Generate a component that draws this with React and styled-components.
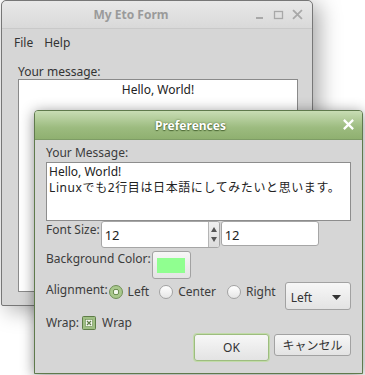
import React from "react";
import styled, { createGlobalStyle } from "styled-components";

const GlobalStyle = createGlobalStyle`
  html, body {
    margin: 0;
    padding: 0;
    background: #ffffff;
  }
  body {
    font-family: "Noto Sans", "Noto Sans CJK JP", sans-serif;
    font-size: 12px;
    color: #3c3c3c;
  }
`;

const Desktop = styled.div`
  position: relative;
  width: 365px;
  height: 375px;
  overflow: hidden;
`;

const MainWindow = styled.div`
  position: absolute;
  left: 1px;
  top: 0;
  width: 310px;
  height: 304px;
  border: 1px solid #777;
  border-radius: 5px 5px 2px 2px;
  background: #d6d6d6;
  box-shadow: 6px 4px 22px rgba(0, 0, 0, 0.35);
  display: flex;
  flex-direction: column;
`;

const MainTitle = styled.div`
  height: 27px;
  border-bottom: 1px solid #c9c9c9;
  border-radius: 5px 5px 0 0;
  background: linear-gradient(#e8e8e8, #d9d9d9);
  display: flex;
  align-items: center;
  justify-content: center;
  padding-right: 52px;
  position: relative;
  font-weight: bold;
  font-size: 12px;
  color: #9a9a9a;
`;

const TitleControls = styled.div`
  position: absolute;
  right: 9px;
  top: 8px;
  display: flex;
  gap: 8px;
  align-items: center;
`;

const MenuBar = styled.div`
  display: flex;
  gap: 11px;
  padding: 0 0 0 12px;
  height: 26px;
  font-size: 12px;
  color: #333;
  align-items: center;
`;

const MainContent = styled.div`
  padding: 9px 14px 12px 16px;
  display: flex;
  flex-direction: column;
  flex: 1;
`;

const MainLabel = styled.div`
  font-size: 12px;
  color: #333;
  line-height: 15px;
`;

const MainBox = styled.div`
  height: 210px;
  border: 1px solid #8a8a8a;
  background: #fff;
  text-align: center;
  font-size: 12px;
  color: #222;
  padding-top: 1px;
`;

const Dialog = styled.div`
  position: absolute;
  left: 34px;
  top: 110px;
  width: 327px;
  height: 262px;
  border: 1px solid #5f7a4c;
  border-radius: 4px 4px 0 0;
  background: #d6d6d6;
  box-shadow: 0 2px 14px rgba(0, 0, 0, 0.45);
  display: flex;
  flex-direction: column;
`;

const DialogTitle = styled.div`
  height: 28px;
  border-bottom: 1px solid #7e9c66;
  border-radius: 3px 3px 0 0;
  background: linear-gradient(#c8ddb4, #9cbb7f 60%, #8fb070);
  display: flex;
  align-items: center;
  justify-content: center;
  padding-right: 16px;
  position: relative;
  font-weight: bold;
  font-size: 12px;
  color: #fff;
  text-shadow: 0 0 2px #4d6a36, 0 1px 1px #4d6a36;
`;

const DialogClose = styled.div`
  position: absolute;
  right: 8px;
  top: 8px;
  display: flex;
`;

const DialogBody = styled.div`
  padding: 5px 11px 0 11px;
  display: flex;
  flex-direction: column;
`;

const Label = styled.div`
  font-size: 12px;
  color: #3c3c3c;
  line-height: 16px;
  white-space: nowrap;
  padding-top: ${(p) => p.$top || 0}px;
`;

const TextArea = styled.div`
  height: 55px;
  border: 1px solid #8d8d8d;
  background: #fff;
  padding: 1px 2px;
  font-size: 12px;
  line-height: 16px;
  color: #222;
  margin-top: 1px;
`;

const WideLine = styled.span`
  letter-spacing: 0.6px;
  white-space: nowrap;
`;

const Row = styled.div`
  display: flex;
  align-items: flex-start;
  gap: ${(p) => p.$gap || 1}px;
  margin-top: ${(p) => p.$mt || 0}px;
`;

const SpinBox = styled.div`
  display: flex;
  width: 117px;
  height: 25px;
  border: 1px solid #a6a6a6;
  border-radius: 3px;
  background: #fff;
  overflow: hidden;
`;

const SpinText = styled.div`
  flex: 1;
  padding: 4px 0 0 3px;
  font-size: 13px;
  color: #222;
`;

const SpinArrows = styled.div`
  width: 10px;
  border-left: 1px solid #b5b5b5;
  background: linear-gradient(#f0f0f0, #dcdcdc);
  display: flex;
  flex-direction: column;
  align-items: center;
  justify-content: space-around;
  padding: 2px 0;
`;

const TextBox = styled.div`
  box-sizing: border-box;
  width: 98px;
  height: 25px;
  border: 1px solid #a6a6a6;
  border-radius: 3px;
  background: #fff;
  padding: 4px 0 0 3px;
  font-size: 13px;
  color: #222;
`;

const Button = styled.div`
  box-sizing: border-box;
  width: ${(p) => p.$w}px;
  height: ${(p) => p.$h}px;
  border: 1px solid ${(p) => (p.$focus ? "#9dbd7f" : "#a2a2a2")};
  box-shadow: ${(p) => (p.$focus ? "0 0 0 1px #c2dba9" : "none")};
  border-radius: 3px;
  background: linear-gradient(#f7f7f7, #e3e3e3);
  display: flex;
  align-items: center;
  justify-content: center;
  font-size: 12px;
  color: #333;
`;

const Swatch = styled.div`
  width: 28px;
  height: 15px;
  background: ${(p) => p.$color};
`;

const RadioGroup = styled.div`
  display: flex;
  align-items: center;
  padding-top: 1px;
`;

const RadioItem = styled.div`
  display: flex;
  align-items: center;
  gap: 5px;
  margin-right: ${(p) => p.$mr}px;
  font-size: 12px;
`;

const RadioDot = styled.div`
  box-sizing: border-box;
  width: 14px;
  height: 14px;
  border-radius: 50%;
  border: 1px solid ${(p) => (p.$on ? "#6f8f55" : "#a3a3a3")};
  background: ${(p) =>
    p.$on
      ? "radial-gradient(circle, #f4f8ef 0 2px, #6f8f55 2.5px 3px, #a8c78c 3.5px)"
      : "linear-gradient(#ffffff, #e6e6e6)"};
`;

const Select = styled.div`
  box-sizing: border-box;
  width: 69px;
  height: 28px;
  border: 1px solid #a2a2a2;
  border-radius: 3px;
  background: linear-gradient(#f7f7f7, #e3e3e3);
  display: flex;
  align-items: center;
  justify-content: space-between;
  padding: 3px 9px 0 5px;
  font-size: 12px;
  color: #333;
`;

const CheckItem = styled.div`
  display: flex;
  align-items: center;
  gap: 6px;
  font-size: 12px;
  padding-top: 4px;
`;

const Footer = styled.div`
  display: flex;
  justify-content: flex-end;
  gap: 5px;
  margin-top: 3px;
  align-items: flex-start;
`;

const Minimize = () => (
  <svg width="10" height="10" viewBox="0 0 10 10">
    <rect x="1" y="7" width="7" height="2" fill="#a8a8a8" />
  </svg>
);

const Maximize = () => (
  <svg width="11" height="10" viewBox="0 0 11 10">
    <rect x="1.5" y="1.5" width="8" height="7" fill="none" stroke="#a8a8a8" strokeWidth="1.3" />
  </svg>
);

const CloseX = ({ color, size = 10, width = 1.8 }) => (
  <svg width={size} height={size} viewBox="0 0 10 10">
    <path d="M1.5 1.5 L8.5 8.5 M8.5 1.5 L1.5 8.5" stroke={color} strokeWidth={width} strokeLinecap="square" />
  </svg>
);

const TriUp = () => (
  <svg width="6" height="5" viewBox="0 0 6 5">
    <path d="M0 5 L3 0 L6 5 Z" fill="#555" />
  </svg>
);

const TriDown = () => (
  <svg width="6" height="5" viewBox="0 0 6 5">
    <path d="M0 0 L6 0 L3 5 Z" fill="#555" />
  </svg>
);

const CaretDown = () => (
  <svg width="9" height="5" viewBox="0 0 9 5">
    <path d="M0 0 L9 0 L4.5 5 Z" fill="#333" />
  </svg>
);

const CheckBoxIcon = () => (
  <svg width="14" height="14" viewBox="0 0 14 14">
    <rect x="0.5" y="0.5" width="13" height="13" rx="1" fill="#9fbf84" stroke="#5f7d48" />
    <rect x="3.5" y="3.5" width="7" height="7" fill="#f6f9f2" stroke="#6f8f55" strokeWidth="0.6" />
    <path d="M5 5 L9 9 M9 5 L5 9" stroke="#5f7d48" strokeWidth="1.2" />
  </svg>
);

const App = () => (
  <>
    <GlobalStyle />
    <Desktop>
      <MainWindow>
        <MainTitle>
          My Eto Form
          <TitleControls>
            <Minimize />
            <Maximize />
            <CloseX color="#a8a8a8" size={11} width={1.6} />
          </TitleControls>
        </MainTitle>
        <MenuBar>
          <span>File</span>
          <span>Help</span>
        </MenuBar>
        <MainContent>
          <MainLabel>Your message:</MainLabel>
          <MainBox>Hello, World!</MainBox>
        </MainContent>
      </MainWindow>

      <Dialog>
        <DialogTitle>
          Preferences
          <DialogClose>
            <CloseX color="#fff" size={11} width={2} />
          </DialogClose>
        </DialogTitle>
        <DialogBody>
          <Label>Your Message:</Label>
          <TextArea>
            Hello, World!
            <br />
            <WideLine>Linuxでも2行目は日本語にしてみたいと思います。</WideLine>
          </TextArea>
          <Row $mt={0} $gap={1}>
            <Label $top={1}>Font Size:</Label>
            <SpinBox>
              <SpinText>12</SpinText>
              <SpinArrows>
                <TriUp />
                <TriDown />
              </SpinArrows>
            </SpinBox>
            <TextBox>12</TextBox>
          </Row>
          <Row $mt={3} $gap={1}>
            <Label>Background Color:</Label>
            <Button $w={39} $h={28}>
              <Swatch $color="#90ff90" />
            </Button>
          </Row>
          <Row $mt={3} $gap={1}>
            <Label>Alignment:</Label>
            <RadioGroup>
              <RadioItem $mr={10}>
                <RadioDot $on />
                Left
              </RadioItem>
              <RadioItem $mr={11}>
                <RadioDot />
                Center
              </RadioItem>
              <RadioItem $mr={8}>
                <RadioDot />
                Right
              </RadioItem>
            </RadioGroup>
            <Select>
              Left
              <CaretDown />
            </Select>
          </Row>
          <Row $mt={0} $gap={3}>
            <Label $top={5}>Wrap:</Label>
            <CheckItem>
              <CheckBoxIcon />
              Wrap
            </CheckItem>
          </Row>
          <Footer>
            <Button $w={75} $h={27} $focus>
              OK
            </Button>
            <Button $w={77} $h={22}>
              キャンセル
            </Button>
          </Footer>
        </DialogBody>
      </Dialog>
    </Desktop>
  </>
);

export default App;
